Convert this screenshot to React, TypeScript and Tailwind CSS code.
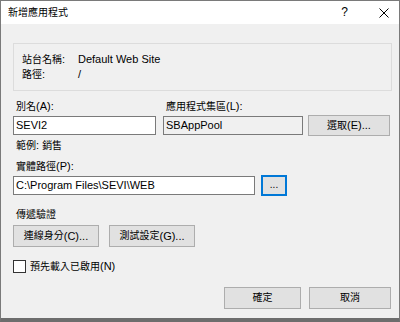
const font = { fontFamily: '"Liberation Sans", "Noto Sans CJK TC", sans-serif' };

const T = ({ text }: { text: string }) => (
  <>
    {text.split(/([\u3400-\u9fff]+)/).map((part, i) =>
      /[\u3400-\u9fff]/.test(part) ? (
        <span key={i} className="text-[10px] leading-none">
          {part}
        </span>
      ) : (
        <span key={i}>{part}</span>
      ),
    )}
  </>
);

const Button = ({ label, className = '' }: { label: string; className?: string }) => (
  <button
    type="button"
    className={`flex items-center justify-center border border-[#adadad] bg-[#e1e1e1] text-[11px] leading-none text-black ${className}`}
  >
    <T text={label} />
  </button>
);

export default function App() {
  return (
    <div
      style={font}
      className="flex h-[322px] w-[400px] flex-col border-x border-t border-b-4 border-x-[#7a7a7a] border-t-[#7a7a7a] border-b-[#6d6d6d] bg-[#f0f0f0] text-[11px] leading-[15px] text-black"
    >
      <div className="flex h-[23px] shrink-0 items-center bg-white pl-[7px]">
        <T text="新增應用程式" />
        <span className="ml-auto mr-[31px] text-[12px]">?</span>
        <svg width="10" height="10" viewBox="0 0 10 10" className="mr-[10px]">
          <path d="M0.5 0.5 L9.5 9.5 M9.5 0.5 L0.5 9.5" stroke="#000" strokeWidth="1" />
        </svg>
      </div>

      <div className="flex flex-col pl-[12px]">
        <div className="mt-[19px] flex h-[48px] w-[379px] flex-col border border-[#dcdcdc] pl-[8px] pt-[8px]">
          <div className="flex h-[15px]">
            <span className="w-[56px]">
              <T text="站台名稱:" />
            </span>
            <span>Default Web Site</span>
          </div>
          <div className="flex h-[15px]">
            <span className="w-[56px]">
              <T text="路徑:" />
            </span>
            <span>/</span>
          </div>
        </div>

        <div className="mt-[8px] flex h-[15px] pl-[3px]">
          <span className="w-[150px]">
            <T text="別名(A):" />
          </span>
          <span>
            <T text="應用程式集區(L):" />
          </span>
        </div>
        <div className="mt-[1px] flex h-[21px] items-center">
          <div className="flex h-[19px] w-[143px] items-center border border-[#7a7a7a] bg-white pl-[2px]">SEVI2</div>
          <div className="ml-[7px] flex h-[19px] w-[140px] items-center border border-[#7a7a7a] bg-[#f0f0f0] pl-[2px]">
            SBAppPool
          </div>
          <Button label="選取(E)..." className="ml-[5px] h-[21px] w-[82px]" />
        </div>
        <div className="mt-[2px] h-[15px] pl-[3px]">
          <T text="範例: 銷售" />
        </div>

        <div className="mt-[6px] h-[15px] pl-[3px]">
          <T text="實體路徑(P):" />
        </div>
        <div className="mt-[1px] flex h-[21px] items-center">
          <div className="flex h-[19px] w-[242px] items-center border border-[#7a7a7a] bg-white pl-[2px]">
            C:\Program Files\SEVI\WEB
          </div>
          <button
            type="button"
            className="ml-[6px] flex h-[21px] w-[26px] items-end justify-center border-2 border-[#0078d7] bg-[#e1e1e1] pb-[4px] text-[10px] leading-none"
          >
            ...
          </button>
        </div>

        <div className="mt-[11px] h-[15px] pl-[3px]">
          <T text="傳遞驗證" />
        </div>
        <div className="mt-[3px] flex gap-[10px]">
          <Button label="連線身分(C)..." className="h-[22px] w-[86px]" />
          <Button label="測試設定(G)..." className="h-[22px] w-[86px]" />
        </div>

        <div className="mt-[12px] flex h-[15px] items-center">
          <span className="h-[13px] w-[13px] border border-[#333] bg-white" />
          <span className="ml-[4px]">
            <T text="預先載入已啟用(N)" />
          </span>
        </div>

        <div className="mt-[13px] flex justify-end pr-[8px]">
          <Button label="確定" className="h-[22px] w-[77px]" />
          <Button label="取消" className="ml-[8px] h-[22px] w-[82px]" />
        </div>
      </div>
    </div>
  );
}
